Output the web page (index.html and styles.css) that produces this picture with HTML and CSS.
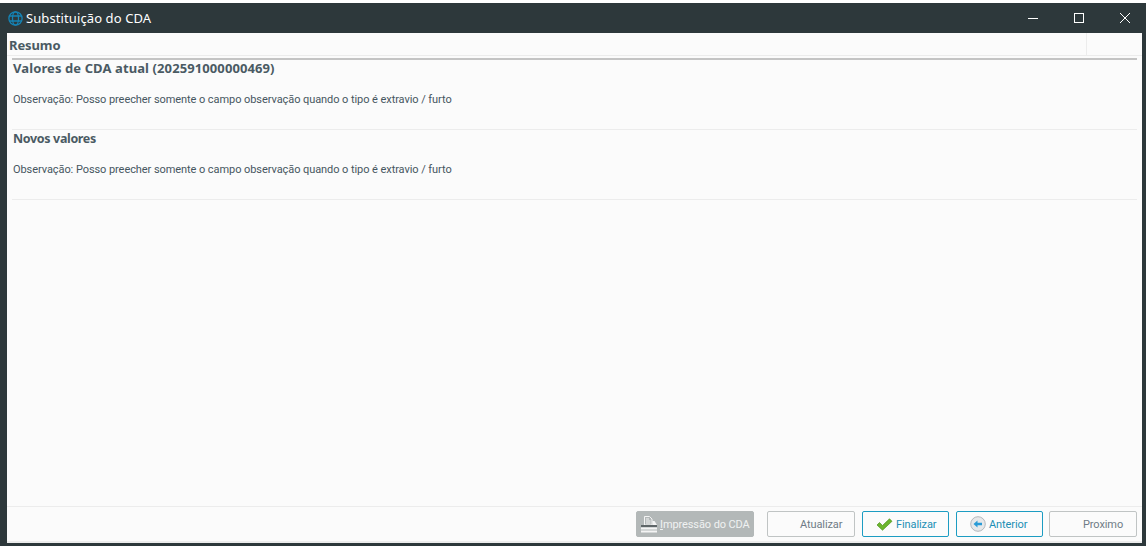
FILE: index.html
```html
<!DOCTYPE html>
<html lang="en">
<head>
  <meta charset="UTF-8" />
  <title>Substituição do CDA</title>
  <link rel="stylesheet" href="styles.css">
</head>
<body>
  <div class="window">
    <div class="titlebar">
      <div class="title">
        <svg class="globe" width="15" height="15" viewBox="0 0 15 15" fill="none" stroke="#1583b5" stroke-width="1.300">
          <circle cx="7.500" cy="7.500" r="6.600"/>
          <ellipse cx="7.500" cy="7.500" rx="3" ry="6.600"/>
          <path d="M1.200 5h12.600M1.200 10h12.600"/>
        </svg>
        <span>Substituição do CDA</span>
      </div>
      <div class="controls">
        <svg width="12" height="12" viewBox="0 0 12 12"><path d="M1 6.500h10" stroke="#fff" stroke-width="1"/></svg>
        <svg width="12" height="12" viewBox="0 0 12 12" fill="none"><rect x="1.500" y="1.500" width="9" height="9" stroke="#fff"/></svg>
        <svg width="12" height="12" viewBox="0 0 12 12"><path d="M1 1l10 10M11 1L1 11" stroke="#fff" stroke-width="1"/></svg>
      </div>
    </div>

    <div class="content">
      <div class="tab-header">
        <div class="tab-title">Resumo</div>
        <div class="tab-rest"></div>
      </div>
      <div class="sections">
        <div class="section">
          <h2>Valores de CDA atual (202591000000469)</h2>
          <p>Observação: Posso preecher somente o campo observação quando o tipo é extravio / furto</p>
        </div>
        <div class="section">
          <h2 class="compact">Novos valores</h2>
          <p>Observação: Posso preecher somente o campo observação quando o tipo é extravio / furto</p>
        </div>
      </div>

      <div class="footer">
        <button class="btn btn-print">
          <svg width="18" height="17" viewBox="0 0 18 17">
            <path d="M4.500 .5h5l2.500 2.500v6h-7.500z" fill="#b3b8b8" stroke="#f4f4f4"/>
            <path d="M6 3h3M6 5h4.500M6 7h4.500" stroke="#f4f4f4"/>
            <path d="M12.500 5h2l2.500 4h-4.500z" fill="#f4f4f4"/>
            <path d="M1 9h16v2H1z" fill="#5f6668"/>
            <path d="M1 12.500h16M1 15.500h16" stroke="#f4f4f4" stroke-width="2"/>
          </svg>
          <span><u>I</u>mpressão do CDA</span>
        </button>
        <button class="btn btn-idle btn-atualizar">Atualizar</button>
        <button class="btn btn-active">
          <svg width="17" height="13" viewBox="0 0 17 13">
            <path d="M1 7l2.500-2.500 3 3L13.500.8 16 3.300 6.500 12.200z" fill="#6cb52d" stroke="#4d9420" stroke-width=".7"/>
          </svg>
          <span>Finalizar</span>
        </button>
        <button class="btn btn-active">
          <svg width="16" height="16" viewBox="0 0 16 16">
            <circle cx="8" cy="8" r="7.300" fill="#e6e8ea" stroke="#b4b8bc"/>
            <path d="M3.500 8l4-3.500V6.800h4.500v2.400H7.500v2.300z" fill="#2a9bd6"/>
          </svg>
          <span>Anterior</span>
        </button>
        <button class="btn btn-idle btn-proximo">Proximo</button>
      </div>
    </div>
  </div>
</body>
</html>
```

FILE: styles.css
```css
* {
  box-sizing: border-box;
}

html, body {
  height: 100%;
}

body {
  margin: 0;
  background: #fff;
  padding-top: 3px;
  font-family: "Noto Sans", sans-serif;
  overflow: hidden;
}

.window {
  height: 543px;
  background: #2d383b;
  padding: 0 4px 3px 7px;
  display: flex;
  flex-direction: column;
}

.titlebar {
  height: 30px;
  margin-left: -7px;
  margin-right: -4px;
  padding: 0 15px 0 8px;
  display: flex;
  align-items: center;
  justify-content: space-between;
  flex: none;
}

.title {
  display: flex;
  align-items: center;
  gap: 3px;
  color: #fff;
  font-size: 13px;
  letter-spacing: 0.1px;
}

.controls {
  display: flex;
  align-items: center;
  gap: 34px;
}

.controls svg {
  display: block;
}

.content {
  flex: 1;
  background: #fbfbfb;
  display: flex;
  flex-direction: column;
  min-height: 0;
}

.tab-header {
  display: flex;
  height: 23px;
  flex: none;
  border-bottom: 1px solid #ececec;
}

.tab-title {
  width: 1080px;
  padding: 3px 0 0 2px;
  font-size: 13px;
  font-weight: bold;
  letter-spacing: -0.1px;
  color: #4a5a63;
  border-right: 1px solid #ececec;
}

.tab-rest {
  flex: 1;
}

.sections {
  flex: 1;
  margin: 2px 5px 0 5px;
  border-top: 2px solid #c4c4c4;
}

.section {
  height: 70px;
  padding: 0 0 0 1px;
  border-bottom: 1px solid #ececec;
}

.section h2 {
  margin: 0;
  font-size: 13px;
  line-height: 17px;
  font-weight: bold;
  letter-spacing: 0.1px;
  color: #4a5a63;
}

.section h2.compact {
  font-size: 12.5px;
  letter-spacing: -0.35px;
}

.section p {
  margin: 15px 0 0;
  font-family: Roboto, sans-serif;
  font-size: 11px;
  line-height: 15px;
  letter-spacing: -0.07px;
  color: #46565f;
}

.footer {
  height: 37px;
  flex: none;
  border-top: 1px solid #ececec;
  border-bottom: 2px solid #ececec;
  padding: 4px 5px 0 0;
  display: flex;
  justify-content: flex-end;
  gap: 7px;
}

.btn {
  height: 26px;
  width: 88px;
  border-radius: 2px;
  background: transparent;
  font-family: Roboto, sans-serif;
  font-size: 11px;
  letter-spacing: -0.1px;
  white-space: nowrap;
  display: flex;
  align-items: center;
  gap: 3px;
  padding: 0 0 0 13px;
}

.btn-print {
  width: 118px;
  margin-right: 6px;
  padding-left: 3px;
  gap: 2px;
  background: #b3b8b8;
  border: 1px solid #b3b8b8;
  color: #f0f2f2;
}

.btn-idle {
  border: 1px solid #c0c4c4;
  color: #6f7b86;
}

.btn-atualizar {
  padding-left: 32px;
}

.btn-proximo {
  margin-left: -1px;
  padding-left: 33px;
}

.btn-active {
  width: 87px;
  border: 1px solid #1c9cc2;
  color: #1c8fb5;
}
```
